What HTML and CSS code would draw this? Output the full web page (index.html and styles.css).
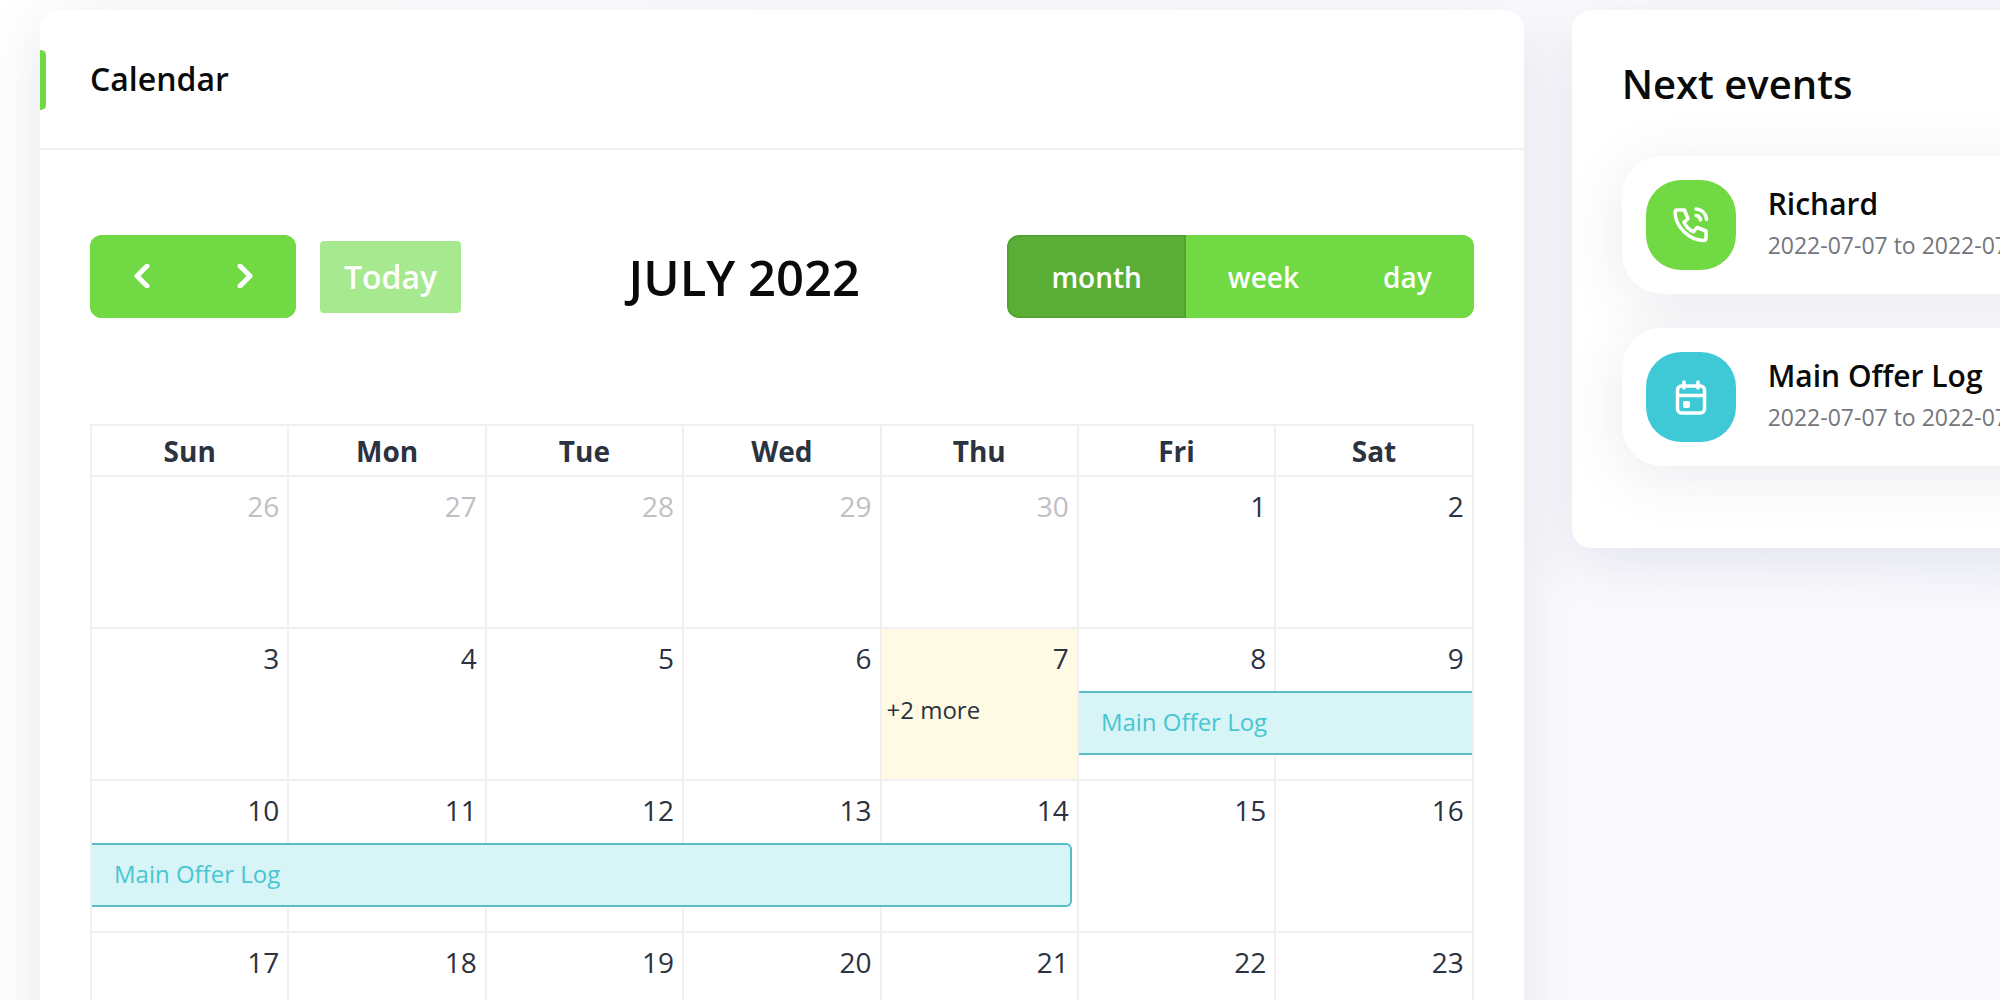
FILE: index.html
```html
<!DOCTYPE html>
<html lang="en">
<head>
	<meta charset="UTF-8">
	<title>Calendar</title>
	<link rel="stylesheet" href="styles.css">
</head>
<body>
	<div class="row">
		<main class="card calendar">
			<div class="card-header">
				<h4 class="card-title">Calendar</h4>
			</div>
			<div class="card-body">
				<div class="toolbar">
					<div class="toolbar-left">
						<div class="button-group">
							<button class="button arrow" type="button" aria-label="Previous month">
								<svg width="16" height="24" viewBox="0 0 16 24"><path d="M13 2L3 12l10 10"/></svg>
							</button>
							<button class="button arrow" type="button" aria-label="Next month">
								<svg width="16" height="24" viewBox="0 0 16 24"><path d="M3 2l10 10L3 22"/></svg>
							</button>
						</div>
						<button class="today" type="button" disabled>Today</button>
					</div>
					<h2 class="month-title">JULY 2022</h2>
					<div class="button-group views">
						<button class="button active" type="button">month</button>
						<button class="button" type="button">week</button>
						<button class="button" type="button">day</button>
					</div>
				</div>

				<table class="month">
					<thead>
						<tr>
							<th>Sun</th>
							<th>Mon</th>
							<th>Tue</th>
							<th>Wed</th>
							<th>Thu</th>
							<th>Fri</th>
							<th>Sat</th>
						</tr>
					</thead>
					<tbody>
						<tr>
							<td class="other">26</td>
							<td class="other">27</td>
							<td class="other">28</td>
							<td class="other">29</td>
							<td class="other">30</td>
							<td>1</td>
							<td>2</td>
						</tr>
						<tr>
							<td>3</td>
							<td>4</td>
							<td>5</td>
							<td>6</td>
							<td class="current">7<a class="more" href="#">+2 more</a></td>
							<td>8<a class="event days-2" href="#">Main Offer Log</a></td>
							<td>9</td>
						</tr>
						<tr>
							<td>10<a class="event days-5 end" href="#">Main Offer Log</a></td>
							<td>11</td>
							<td>12</td>
							<td>13</td>
							<td>14</td>
							<td>15</td>
							<td>16</td>
						</tr>
						<tr>
							<td>17</td>
							<td>18</td>
							<td>19</td>
							<td>20</td>
							<td>21</td>
							<td>22</td>
							<td>23</td>
						</tr>
					</tbody>
				</table>
			</div>
		</main>

		<aside class="card next">
			<h3 class="next-title">Next events</h3>
			<div class="next-item">
				<div class="icon green">
					<svg width="40" height="40" viewBox="0 0 40 40">
						<path d="M6 5h7.500l3.500 9-4 3.200c2 4.500 5 7.500 9.500 9.500l3.500-4.200 9 3.500v7c0 1.500-1 2.500-2.500 2.500C18 35 4.500 22 4 7.500 4 6 4.800 5 6 5z"/>
						<path d="M25 4c6 .5 10 4.500 10.500 10.500"/>
						<path d="M25 10.500c2.800.3 4.200 1.700 4.500 4.500"/>
					</svg>
				</div>
				<div>
					<h5 class="next-name">Richard</h5>
					<p class="next-date">2022-07-07 to 2022-07-07</p>
				</div>
			</div>
			<div class="next-item">
				<div class="icon cyan">
					<svg width="40" height="40" viewBox="0 0 40 40">
						<rect x="6.500" y="9" width="27" height="27" rx="4"/>
						<path d="M6.500 18.500h27M13 5v6M27 5v6"/>
						<rect class="dot" x="12" y="24" width="7" height="7" rx="2"/>
					</svg>
				</div>
				<div>
					<h5 class="next-name">Main Offer Log</h5>
					<p class="next-date">2022-07-07 to 2022-07-12</p>
				</div>
			</div>
		</aside>
	</div>
</body>
</html>
```

FILE: styles.css
```css
* {
	box-sizing: border-box;
}

body {
	margin: 0;
	overflow: hidden;
	background: linear-gradient(to right, #fff, #f9f9fe);
	color: #0a0a0a;
	font-family: "Open Sans", "Noto Sans", sans-serif;
}

h2, h3, h4, h5, p {
	margin: 0;
	font-weight: 600;
}

button {
	border: 0;
	font-family: inherit;
	font-weight: 600;
	color: white;
}

svg {
	fill: none;
	stroke: white;
	stroke-width: 3.5;
	stroke-linecap: round;
	stroke-linejoin: round;
}

.row {
	display: flex;
	align-items: flex-start;
	gap: 48px;
	width: 114.8%;
	padding: 10px 24px;
	margin-left: 16px;
}

.card {
	flex: 1;
	background: white;
	border-radius: 20px;
	box-shadow: 0 15px 60px rgba(60, 60, 110, 0.12);
}

.calendar {
	flex: 0 0 66%;
}

.card-header {
	position: relative;
	padding: 48px 50px;
	border-bottom: 2px solid #f0f0f0;
}

.card-header::before {
	content: "";
	position: absolute;
	left: 0;
	top: 40px;
	width: 6px;
	height: 60px;
	border-radius: 0 5px 5px 0;
	background: #70d944;
}

.card-title {
	font-size: 32px;
	line-height: 42px;
}

.card-body {
	padding: 85px 50px 50px;
}

.toolbar {
	display: flex;
	align-items: center;
	justify-content: space-between;
	margin-bottom: 106px;
}

.toolbar-left {
	display: flex;
	align-items: center;
	gap: 24px;
}

.button-group {
	display: flex;
	overflow: hidden;
	border-radius: 12px;
	background: #70d944;
}

.button {
	height: 83px;
	padding: 0 42px;
	background: #70d944;
	font-size: 28px;
}

.arrow {
	width: 103px;
}

.arrow svg {
	stroke-width: 5;
}

.active {
	border: 2px solid #54a234;
	border-radius: 12px 0 0 12px;
	background: #5aae36;
}

.today {
	height: 72px;
	padding: 0 24px;
	border-radius: 4px;
	background: #a6e98e;
	font-size: 32px;
}

.month-title {
	padding-left: 20px;
	font-size: 49px;
	line-height: 66px;
}

.month {
	width: 100%;
	table-layout: fixed;
	border-collapse: collapse;
	color: #2b3240;
	font-size: 28px;
	line-height: 38px;
}

.month th,
.month td {
	border: 2px solid #f0f0f0;
}

.month th {
	height: 51px;
	padding: 0;
}

.month td {
	position: relative;
	height: 152px;
	padding: 10px 8px 10px 5px;
	text-align: right;
	vertical-align: top;
}

.month .other {
	color: #bfc0c4;
}

.month .current {
	background: #fffae4;
}

.more {
	display: block;
	margin-top: 14px;
	color: inherit;
	font-size: 24px;
	text-align: left;
	text-decoration: none;
}

/* an event lies over the day cells that it covers */
.event {
	position: absolute;
	z-index: 1;
	top: 62px;
	left: 0;
	height: 64px;
	padding: 0 22px;
	border: solid #5bbcc9;
	border-width: 2px 0;
	background: #d7f4f6;
	color: #48c6d2;
	font-size: 24px;
	line-height: 58px;
	text-align: left;
	text-decoration: none;
}

.days-2 {
	width: calc(200% + 2px);
}

.days-5 {
	width: calc(500% + 3px);
}

.end {
	border-right-width: 2px;
	border-radius: 0 6px 6px 0;
}

.next {
	padding: 49px 50px 82px;
}

.next-title {
	margin-bottom: 47px;
	font-size: 40px;
	line-height: 50px;
}

.next-item {
	display: flex;
	align-items: center;
	gap: 32px;
	padding: 24px;
	border-radius: 40px;
	background: white;
	box-shadow: 0 10px 60px rgba(60, 60, 110, 0.1);
}

.next-item + .next-item {
	margin-top: 34px;
}

.icon {
	display: flex;
	flex: none;
	align-items: center;
	justify-content: center;
	width: 90px;
	height: 90px;
	border-radius: 35px;
}

.green {
	background: #70d944;
}

.cyan {
	background: #3fc9d6;
}

.dot {
	fill: white;
	stroke: none;
}

.next-name {
	font-size: 30px;
	line-height: 42px;
}

.next-date {
	padding-bottom: 2px;
	color: #73767c;
	font-size: 23px;
	font-weight: 400;
	line-height: 40px;
}
```
